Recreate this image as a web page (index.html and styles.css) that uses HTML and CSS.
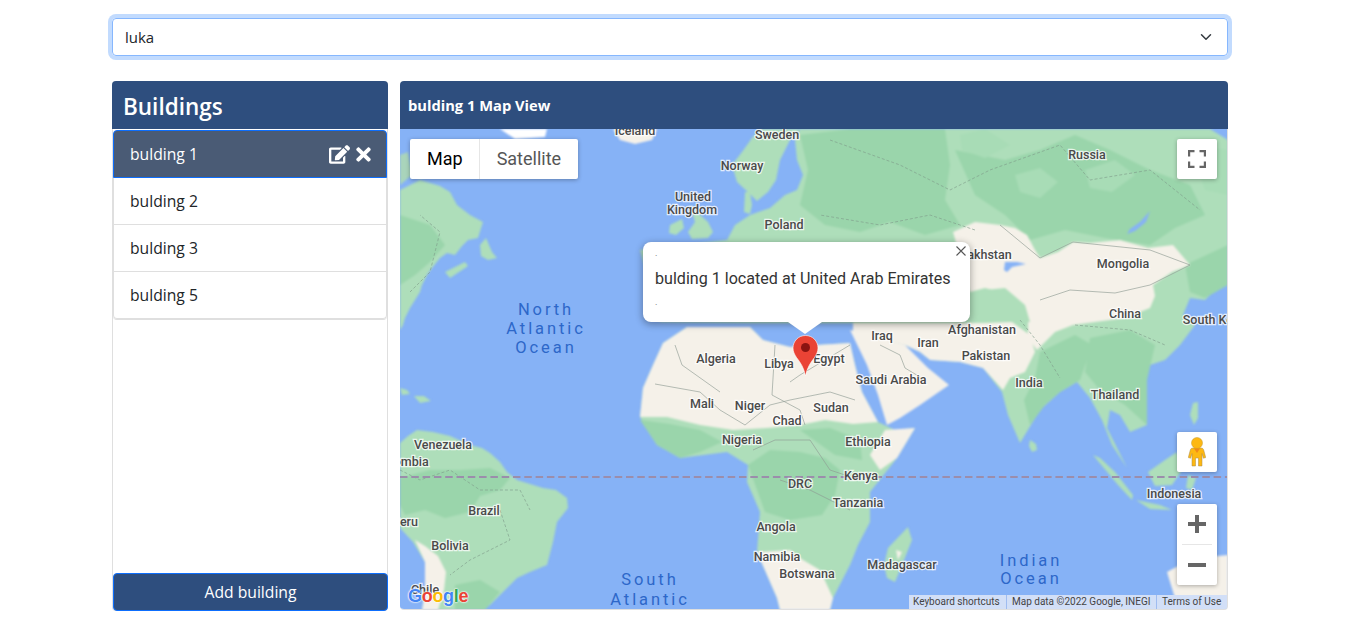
FILE: index.html
```html
<!DOCTYPE html>
<html lang="en">
<head>
    <meta charset="UTF-8">
    <meta name="viewport" content="width=device-width, initial-scale=1.0">
    <title>Buildings</title>
    <link rel="stylesheet" href="styles.css">
</head>
<body>
    <div class="container">
        <div class="owner-select">
            <span>luka</span>
            <svg class="chevron" viewBox="0 0 16 16" width="12" height="12"><path d="M2 5l6 6 6-6" fill="none" stroke="#343a40" stroke-width="2" stroke-linecap="round" stroke-linejoin="round"/></svg>
        </div>

        <div class="content">
            <div class="buildings-panel">
                <h3 class="buildings-title">Buildings</h3>
                <ul class="building-list">
                    <li class="building-item active">
                        <span>bulding 1</span>
                        <span class="item-actions">
                            <svg viewBox="0 0 576 512" width="21" height="19"><path fill="#fff" d="M402.6 83.2l90.2 90.2c3.8 3.8 3.8 10 0 13.8L274.4 405.6l-92.8 10.3c-12.4 1.4-22.9-9.1-21.5-21.5l10.3-92.8L388.8 83.2c3.8-3.8 10-3.8 13.8 0zm162-22.9l-48.8-48.8c-15.2-15.2-39.9-15.2-55.2 0l-35.4 35.4c-3.8 3.8-3.8 10 0 13.8l90.2 90.2c3.8 3.8 10 3.8 13.8 0l35.4-35.4c15.2-15.3 15.2-40 0-55.2zM384 346.2V448H64V128h229.8c3.2 0 6.2-1.3 8.5-3.5l40-40c7.6-7.6 2.2-20.5-8.5-20.5H48C21.5 64 0 85.5 0 112v352c0 26.5 21.5 48 48 48h352c26.5 0 48-21.5 48-48V306.2c0-10.7-12.9-16-20.5-8.5l-40 40c-2.2 2.3-3.5 5.3-3.5 8.5z"/></svg>
                            <svg viewBox="0 0 352 512" width="15" height="21"><path fill="#fff" d="M242.72 256l100.07-100.07c12.28-12.28 12.28-32.19 0-44.48l-22.24-22.24c-12.28-12.28-32.19-12.28-44.48 0L176 189.28 75.93 89.21c-12.28-12.28-32.19-12.28-44.48 0L9.21 111.45c-12.28 12.28-12.28 32.19 0 44.48L109.28 256 9.21 356.07c-12.28 12.28-12.28 32.19 0 44.48l22.24 22.24c12.28 12.28 32.2 12.28 44.48 0L176 322.72l100.07 100.07c12.28 12.28 32.2 12.28 44.48 0l22.24-22.24c12.28-12.28 12.28-32.19 0-44.48L242.72 256z"/></svg>
                        </span>
                    </li>
                    <li class="building-item">bulding 2</li>
                    <li class="building-item">bulding 3</li>
                    <li class="building-item">bulding 5</li>
                </ul>
                <button class="add-btn">Add building</button>
            </div>

            <div class="map-panel">
                <div class="map-title">bulding 1 Map View</div>
                <div class="map">
                    <svg class="map-canvas" viewBox="400 129 827 480" width="827" height="480">
                        <g class="land">
                            <!-- Americas -->
                            <polygon class="green" points="400,190 420,180 440,186 450,192 457,205 470,215 483,222 478,238 468,240 462,246 455,255 447,253 440,258 432,268 427,275 422,285 420,292 410,308 405,318 403,325 400,330"/>
                            <polygon class="green" points="480,245 486,238 492,252 497,258 488,260 481,256"/>
                            <polygon class="green" points="445,272 465,262 468,266 450,278"/>
                            <polygon class="soft" points="400,155 408,152 412,175 400,185"/>
                            <polygon class="mid" points="400,215 430,225 445,245 430,262 415,275 400,285"/>
                            <polygon class="green" points="400,388 407,390 410,394 402,395"/>
                            <polygon class="green" points="414,396 424,396 431,401 420,403"/>
                            <polygon class="green" points="400,443 408,436 417,430 433,432 450,436 470,445 482,448 490,453 500,462 507,472 517,480 530,484 543,488 556,490 567,498 568,508 557,522 553,542 547,565 530,572 517,578 500,595 490,605 483,610 422,610 425,592 425,562 413,542 400,528"/>
                            <polygon class="mid" points="400,478 430,470 460,470 490,468 510,478 500,490 480,496 470,512 445,518 425,510 405,515 400,505"/>
                            <polygon class="mid" points="455,585 480,580 500,592 485,610 455,610"/>
                            <polygon class="pale" points="415,540 425,546 438,556 446,572 444,590 438,610 422,610 425,592 425,562"/>
                            <polygon class="white" points="500,129 547,129 545,137 515,139"/>
                            <polygon class="pale" points="613,129 657,129 652,140 635,144 620,140"/>

                            <!-- Britain and Scandinavia -->
                            <polygon class="green" points="690,205 700,215 708,222 713,232 708,238 692,239 688,232 695,222"/>
                            <polygon class="green" points="670,225 682,219 684,228 676,235 669,233"/>
                            <polygon class="green" points="752,138 760,129 800,129 790,140 780,160 776,180 768,192 757,201 750,194 737,182 732,165 742,152"/>
                            <polygon class="green" points="745,192 750,192 752,205 750,214 744,212"/>

                            <!-- Eurasia -->
                            <polygon class="green" points="640,250 727,240 735,225 750,215 770,208 785,195 797,190 803,175 797,160 795,140 800,129 1210,129 1228,140 1228,285 1215,290 1205,300 1190,298 1183,315 1195,325 1180,345 1165,360 1150,365 1137,375 1147,400 1147,425 1130,432 1120,415 1110,410 1107,428 1118,450 1127,468 1112,445 1102,420 1090,398 1077,382 1060,392 1040,410 1020,443 1008,415 1002,392 983,368 960,362 930,360 920,352 905,345 853,332 853,323 750,323 660,322"/>
                            <polygon class="mid" points="800,135 850,129 945,129 950,165 945,200 960,225 925,235 890,222 860,232 825,225 800,205 808,170"/>
                            <polygon class="mid" points="955,150 1005,160 1040,150 1075,135 1110,150 1150,170 1190,185 1205,215 1175,228 1150,245 1105,238 1065,230 1030,240 1005,215 975,195"/>
                            <polygon class="light" points="960,135 985,129 1010,145 985,158 962,150"/>
                            <polygon class="light" points="1015,175 1040,168 1058,182 1040,198 1020,192"/>
                            <polygon class="light" points="1085,170 1115,160 1135,175 1112,192 1090,188"/>
                            <polygon class="light" points="1190,145 1228,150 1228,195 1205,190"/>
                            <polygon class="mid" points="1185,265 1228,245 1228,285 1205,298 1190,292"/>
                            <polygon class="mid" points="1090,338 1130,330 1155,345 1147,380 1147,425 1125,405 1100,390 1085,372"/>
                            <polygon class="mid" points="1040,352 1075,335 1092,345 1080,380 1060,392 1045,405 1030,425 1024,400 1035,378"/>
                            <polygon class="pale" points="953,232 975,222 1000,225 1015,228 1027,235 1035,250 1040,258 1058,252 1073,242 1090,243 1120,240 1148,248 1173,245 1190,265 1172,272 1153,285 1155,296 1150,308 1125,318 1095,322 1073,325 1055,332 1037,350 1028,338 1028,318 1015,298 1000,292 985,288 970,292"/>
                            <polygon class="green" points="985,290 1005,288 1025,305 1030,322 1012,322 995,312"/>
                            <polygon class="pale" points="853,323 985,323 1012,322 1030,335 1035,352 1025,372 1010,378 1003,390 983,368 960,362 930,360 920,352 905,345 853,332"/>
                            <polygon class="water" points="903,350 915,352 924,362 918,366 908,358"/>
                            <polygon class="water" points="1005,262 1017,262 1026,264 1012,267 1007,272 1004,270"/>
                            <polygon class="water" points="1150,211 1146,222 1135,231 1127,234 1130,229 1140,222"/>

                            <!-- Arabia -->
                            <polygon class="pale" points="850,330 867,365 878,395 887,425 900,418 920,405 949,385 933,372 928,368 918,358 905,345"/>

                            <!-- Africa -->
                            <polygon class="green" points="653,365 663,343 687,327 750,327 763,340 790,347 817,345 850,343 855,365 862,392 878,422 895,430 915,428 897,458 870,492 870,522 858,545 850,565 833,598 830,610 780,610 777,598 757,552 760,512 747,482 748,465 727,452 680,458 657,445 640,417 643,388"/>
                            <polygon class="pale" points="653,365 663,343 687,327 750,327 763,340 790,347 817,345 850,343 855,365 862,392 878,422 853,424 825,420 800,425 767,428 733,430 700,425 667,417 640,417 643,388"/>
                            <polygon class="pale" points="885,430 915,428 897,458 880,470 870,455"/>
                            <polygon class="pale" points="757,552 790,550 803,560 820,570 833,598 830,610 780,610 777,598"/>
                            <polygon class="mid" points="748,465 770,450 800,452 825,458 840,470 835,495 822,515 790,520 765,512"/>
                            <polygon class="mid" points="640,420 670,424 700,430 722,442 700,452 680,458 657,445"/>
                            <polygon class="mid" points="800,430 830,428 860,440 862,460 835,455"/>
                            <polygon class="green" points="908,527 912,540 902,565 895,582 887,578 884,565 888,548"/>
                            <polygon class="pale" points="896,550 902,552 898,560"/>

                            <!-- South East Asia and Australia -->
                            <polygon class="green" points="1030,440 1036,444 1037,450 1032,452 1029,446"/>
                            <polygon class="green" points="1093,455 1100,458 1115,472 1133,495 1132,500 1118,485"/>
                            <polygon class="green" points="1136,500 1160,505 1172,510 1150,509"/>
                            <polygon class="green" points="1148,472 1165,460 1177,452 1182,470 1172,485 1155,486"/>
                            <polygon class="green" points="1188,475 1196,478 1192,490 1186,488"/>
                            <polygon class="green" points="1193,403 1198,402 1198,418 1194,425 1190,415"/>
                            <polygon class="pale" points="1167,572 1180,565 1196,558 1228,555 1228,609 1180,609 1174,595"/>
                        </g>

                        <g class="borders">
                            <polyline points="655,384 700,392 720,410 745,425 770,405 790,400 830,392 855,400"/>
                            <polyline points="775,345 772,395 800,410 805,425"/>
                            <polyline points="675,345 682,365 720,392"/>
                            <polyline points="850,345 800,375 790,382"/>
                            <polyline points="880,345 900,355 905,368 925,380"/>
                            <polyline points="1000,225 1040,258 1073,242 1150,250 1190,265 1150,285 1115,293 1070,290 1040,300"/>
                            <polyline points="753,450 775,440 810,440 830,470 860,480"/>
                            <polyline points="780,480 810,490 850,510"/>
                        </g>
                        <g class="borders dashed">
                            <polyline points="400,470 420,480 450,470 480,490 520,490 530,510"/>
                            <polyline points="500,510 510,540 470,560 450,575"/>
                            <polyline points="410,292 430,272 440,232 420,215"/>
                            <polyline points="830,140 900,165 950,190 990,170 1060,145 1090,180 1150,170 1200,210"/>
                            <polyline points="975,230 930,215 880,225 820,215"/>
                            <polyline points="1020,320 1040,345 1060,378"/>
                            <polyline points="1075,325 1130,330 1165,345"/>
                        </g>

                        <line class="equator" x1="400" y1="477" x2="1227" y2="477"/>

                        <g class="labels">
                            <text x="635" y="135">Iceland</text>
                            <text x="777" y="139">Sweden</text>
                            <text x="742" y="170">Norway</text>
                            <text x="693" y="201">United</text>
                            <text x="692" y="214">Kingdom</text>
                            <text x="784" y="229">Poland</text>
                            <text x="1087" y="159">Russia</text>
                            <text x="979" y="259">Kazakhstan</text>
                            <text x="1123" y="268">Mongolia</text>
                            <text x="1125" y="318">China</text>
                            <text x="1217" y="324">South Korea</text>
                            <text x="982" y="334">Afghanistan</text>
                            <text x="986" y="360">Pakistan</text>
                            <text x="882" y="340">Iraq</text>
                            <text x="928" y="347">Iran</text>
                            <text x="716" y="363">Algeria</text>
                            <text x="779" y="368">Libya</text>
                            <text x="829" y="363">Egypt</text>
                            <text x="891" y="384">Saudi Arabia</text>
                            <text x="1029" y="387">India</text>
                            <text x="1115" y="399">Thailand</text>
                            <text x="702" y="408">Mali</text>
                            <text x="750" y="410">Niger</text>
                            <text x="787" y="425">Chad</text>
                            <text x="831" y="412">Sudan</text>
                            <text x="742" y="444">Nigeria</text>
                            <text x="868" y="446">Ethiopia</text>
                            <text x="861" y="480">Kenya</text>
                            <text x="858" y="507">Tanzania</text>
                            <text x="800" y="488">DRC</text>
                            <text x="776" y="531">Angola</text>
                            <text x="777" y="561">Namibia</text>
                            <text x="807" y="578">Botswana</text>
                            <text x="902" y="569">Madagascar</text>
                            <text x="1174" y="498">Indonesia</text>
                            <text x="443" y="449">Venezuela</text>
                            <text x="402" y="466">Colombia</text>
                            <text x="405" y="526">Peru</text>
                            <text x="484" y="515">Brazil</text>
                            <text x="450" y="550">Bolivia</text>
                            <text x="425" y="594">Chile</text>
                        </g>
                        <g class="ocean-labels">
                            <text x="546" y="315">North</text>
                            <text x="546" y="334">Atlantic</text>
                            <text x="546" y="353">Ocean</text>
                            <text x="650" y="585">South</text>
                            <text x="650" y="605">Atlantic</text>
                            <text x="1031" y="566">Indian</text>
                            <text x="1031" y="584">Ocean</text>
                        </g>

                        <path class="pin" d="M805.500 335.500c-7 0-12.500 5.500-12.500 12.500 0 3.500 1.500 6.500 3.500 9.500 4 5 7.500 10.500 9 18.500 1.500-8 5-13.500 9-18.500 2-3 3.500-6 3.500-9.500 0-7-5.500-12.500-12.500-12.500z"/>
                        <circle class="pin-dot" cx="805.500" cy="347.500" r="4.500"/>
                    </svg>

                    <div class="map-type">
                        <span class="map-type-btn selected">Map</span>
                        <span class="map-type-btn">Satellite</span>
                    </div>

                    <div class="map-btn fullscreen-btn">
                        <svg viewBox="0 0 18 18" width="18" height="18"><path d="M1 6.500V1h5.500M11.500 1H17v5.500M17 11.500V17h-5.500M6.500 17H1v-5.500" fill="none" stroke="#666" stroke-width="2.400"/></svg>
                    </div>

                    <div class="map-btn pegman-btn">
                        <svg viewBox="0 0 18 30" width="18" height="30">
                            <path d="M5 11h8c1.600 0 2.300.8 2.700 2l2 7.600-2.300.6-1.400-4.700V29h-3.500v-8H7.500v8H4V16.500l-1.400 4.700-2.300-.6 2-7.600C2.700 11.800 3.400 11 5 11z" fill="#fdb813" stroke="#a98b4a" stroke-width=".5"/>
                            <circle cx="9" cy="6" r="5.500" fill="#fdb813" stroke="#c59a2f" stroke-width=".5"/>
                            <path d="M6 11.500l3 4.500 3-4.500z" fill="#ef8a1a"/>
                        </svg>
                    </div>

                    <div class="zoom-control">
                        <div class="zoom-btn">
                            <svg viewBox="0 0 18 18" width="18" height="18"><path d="M0 7h7V0h4v7h7v4h-7v7H7v-7H0z" fill="#666"/></svg>
                        </div>
                        <div class="zoom-divider"></div>
                        <div class="zoom-btn">
                            <svg viewBox="0 0 18 4" width="18" height="4"><rect width="18" height="4" fill="#666"/></svg>
                        </div>
                    </div>

                    <div class="info-window">
                        <button class="info-close">
                            <svg viewBox="0 0 10 10" width="10" height="10"><path d="M.5.5l9 9M9.500.5l-9 9" stroke="#565656" stroke-width="1.100"/></svg>
                        </button>
                        <p class="info-dot">.</p>
                        <p class="info-text">bulding 1 located at United Arab Emirates</p>
                        <p class="info-dot">.</p>
                    </div>

                    <div class="google-logo"><span class="g-blue">G</span><span class="g-red">o</span><span class="g-yellow">o</span><span class="g-blue">g</span><span class="g-green">l</span><span class="g-red">e</span></div>

                    <div class="attribution">
                        <span class="attr-item shortcuts">Keyboard shortcuts</span>
                        <span class="attr-item data">Map data ©2022 Google, INEGI</span>
                        <span class="attr-item terms">Terms of Use</span>
                    </div>
                </div>
            </div>
        </div>
    </div>
</body>
</html>
```

FILE: styles.css
```css
* {
    box-sizing: border-box;
}

body {
    margin: 0;
    background: #fff;
    color: #212529;
    font-family: "Open Sans", "Noto Sans", sans-serif;
    font-size: 15.700px;
}

.container {
    width: 1116px;
    margin-left: 112px;
    padding-top: 18px;
}

.owner-select {
    display: flex;
    justify-content: space-between;
    align-items: center;
    height: 38px;
    padding: 0 15px 0 12px;
    border: 1px solid #86b7fe;
    border-radius: 4px;
    box-shadow: 0 0 0 4px #c2dbfe;
    font-size: 15px;
}

.content {
    display: flex;
    gap: 12px;
    margin-top: 25px;
}

/* Left column */
.buildings-panel {
    display: flex;
    flex-direction: column;
    width: 276px;
    height: 530px;
    border: 1px solid #dfdfdf;
    border-top: 0;
    border-radius: 4px;
}

.buildings-title {
    margin: 0 -1px;
    height: 48px;
    padding: 0 11px;
    border-radius: 4px 4px 0 0;
    background: #2e4e7e;
    color: #fff;
    font-size: 22.500px;
    font-weight: 600;
    line-height: 51px;
}

.building-list {
    list-style: none;
    margin: 1px 0 0;
    padding: 0;
    border-bottom: 1px solid #dfdfdf;
    border-radius: 4px;
}

.building-item {
    display: flex;
    justify-content: space-between;
    align-items: center;
    height: 47px;
    padding: 0 16px;
    border: 1px solid #dfdfdf;
    border-top: 0;
}

.building-item:last-child {
    border-bottom: 1px solid #dfdfdf;
    border-radius: 0 0 4px 4px;
}

.building-item.active {
    height: 48px;
    border: 1px solid #0d6efd;
    border-radius: 4px 4px 0 0;
    background: #4a5b75;
    color: #fff;
}

.item-actions {
    display: flex;
    align-items: center;
    gap: 6px;
    margin-right: -1px;
}

.add-btn {
    height: 38px;
    margin: auto -1px -1px 0;
    border: 1px solid #0d6efd;
    border-radius: 4px;
    background: #2e4e7e;
    color: #fff;
    font-family: inherit;
    font-size: 15.700px;
}

/* Map column */
.map-panel {
    width: 828px;
    height: 529px;
}

.map-title {
    height: 48px;
    padding-left: 8px;
    border-radius: 4px 4px 0 0;
    background: #2e4e7e;
    color: #fff;
    font-size: 14.700px;
    font-weight: 700;
    line-height: 49px;
}

.map {
    position: relative;
    width: 828px;
    height: 481px;
    overflow: hidden;
    border-right: 1px solid #dfdfdf;
    border-bottom: 1px solid #dfdfdf;
    border-radius: 0 0 4px 4px;
    font-family: Roboto, sans-serif;
}

.map-canvas {
    display: block;
    background: #86b2f6;
}

.land {
    filter: blur(.8px);
}

.green { fill: #aedeba; }
.mid { fill: #9ad5ab; }
.light { fill: #a8dcb6; }
.soft { fill: #a9d4bb; }
.pale { fill: #f5f1e9; }
.white { fill: #fff; }
.water { fill: #86b2f6; }

.borders polyline {
    fill: none;
    stroke: #8d9a93;
    stroke-width: .8;
    opacity: .8;
}

.borders.dashed polyline {
    stroke-dasharray: 3 2;
    stroke: #7f9c8a;
}

.equator {
    stroke: #9b8dab;
    stroke-width: 2;
    stroke-dasharray: 7.500 3.800;
}

.labels text {
    fill: #4a4a4a;
    stroke: rgba(255, 255, 255, .75);
    stroke-width: 2.500px;
    paint-order: stroke;
    font-size: 12.500px;
    font-weight: 500;
    text-anchor: middle;
}

.ocean-labels text {
    fill: #2d67c9;
    font-size: 16.500px;
    letter-spacing: 2.900px;
    text-anchor: middle;
}

.pin {
    fill: #ea4335;
    stroke: #fff;
    stroke-width: .6;
}

.pin-dot {
    fill: #8a1411;
}

.map-type {
    position: absolute;
    top: 10px;
    left: 10px;
    display: flex;
    height: 40px;
    border-radius: 2px;
    background: #fff;
    box-shadow: 0 1px 4px rgba(0, 0, 0, .3);
    font-size: 18px;
    line-height: 40px;
}

.map-type-btn {
    padding: 0 17px;
    color: #565656;
}

.map-type-btn.selected {
    padding-right: 16px;
    border-right: 1px solid #e6e6e6;
    color: #000;
}

.map-btn {
    position: absolute;
    right: 10px;
    display: flex;
    justify-content: center;
    align-items: center;
    width: 40px;
    height: 40px;
    border-radius: 2px;
    background: #fff;
    box-shadow: 0 1px 4px rgba(0, 0, 0, .3);
}

.fullscreen-btn {
    top: 10px;
}

.pegman-btn {
    top: 303px;
}

.zoom-control {
    position: absolute;
    top: 375px;
    right: 10px;
    width: 40px;
    height: 81px;
    border-radius: 2px;
    background: #fff;
    box-shadow: 0 1px 4px rgba(0, 0, 0, .3);
}

.zoom-btn {
    display: flex;
    justify-content: center;
    align-items: center;
    height: 40px;
}

.zoom-divider {
    height: 1px;
    margin: 0 5px;
    background: #e6e6e6;
}

.info-window {
    position: absolute;
    top: 113px;
    left: 243px;
    width: 327px;
    height: 80px;
    padding: 9px 12px;
    border-radius: 8px;
    background: #fff;
    box-shadow: 0 2px 7px 1px rgba(0, 0, 0, .3);
    color: #333;
}

.info-window::after {
    content: "";
    position: absolute;
    top: 80px;
    left: 145px;
    border-left: 17px solid transparent;
    border-right: 17px solid transparent;
    border-top: 12px solid #fff;
}

.info-close {
    position: absolute;
    top: 4px;
    right: 4px;
    display: flex;
    padding: 0;
    border: 0;
    background: none;
}

.info-dot {
    margin: 0;
    height: 7px;
    color: #666;
    font-size: 9px;
    line-height: 4px;
}

.info-text {
    margin: 11px 0 12px;
    font-size: 16.100px;
    line-height: 19px;
    white-space: nowrap;
}

.google-logo {
    position: absolute;
    left: 8px;
    bottom: 1px;
    font-family: "Liberation Sans", sans-serif;
    font-size: 18px;
    font-weight: 700;
    letter-spacing: -.3px;
    line-height: 24px;
    text-shadow: 0 0 2px #fff, 0 0 2px #fff, 0 0 1px #fff;
}

.g-blue { color: #4285f4; }
.g-red { color: #ea4335; }
.g-yellow { color: #fbbc05; }
.g-green { color: #34a853; }

.attribution {
    position: absolute;
    right: 0;
    bottom: 0;
    display: flex;
    height: 14px;
    color: #444;
    font-size: 10px;
    line-height: 14px;
}

.attr-item {
    background: #d2dff7;
    white-space: nowrap;
}

.shortcuts {
    width: 98px;
    padding-left: 4px;
    border-right: 1px solid #9fbcf0;
}

.data {
    width: 150px;
    padding-left: 5px;
    border-right: 1px solid #9fbcf0;
}

.terms {
    width: 70px;
    padding-left: 5px;
}
```
